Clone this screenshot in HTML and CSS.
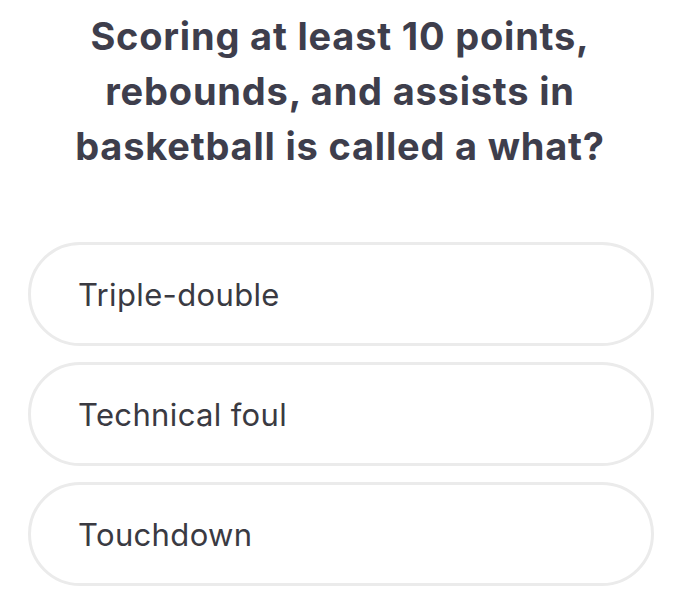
FILE: index.html
```html
<!DOCTYPE html>
<html>
<head>
<meta charset="utf-8">
<link rel="stylesheet" href="styles.css">
</head>
<body>
<main class="quiz">
  <h1 class="question">Scoring at least 10 points, rebounds, and assists in basketball is called a what?</h1>
  <ul class="options">
    <li class="option">Triple-double</li>
    <li class="option">Technical foul</li>
    <li class="option">Touchdown</li>
  </ul>
</main>
</body>
</html>
```
FILE: styles.css
```css
html, body {
  margin: 0;
  padding: 0;
  background: #ffffff;
}
body {
  font-family: Inter, "Open Sans", sans-serif;
  color: #3b3b47;
}
.quiz {
  width: 680px;
  padding: 9px 0 0;
  box-sizing: border-box;
}
.question {
  margin: 0 auto;
  width: 610px;
  text-align: center;
  font-size: 38px;
  line-height: 55px;
  font-weight: 700;
  color: #3e3e4c;
  letter-spacing: 0.8px;
}
.options {
  list-style: none;
  margin: 68px 0 0;
  padding: 0 26px 0 28px;
  display: flex;
  flex-direction: column;
  gap: 16px;
}
.option {
  height: 104px;
  box-sizing: border-box;
  border: 3px solid #ebebeb;
  border-radius: 52px;
  display: flex;
  align-items: center;
  padding-left: 47px;
  font-size: 31px;
  font-weight: 400;
  letter-spacing: 0.35px;
  color: #3a3a42;
}
```
